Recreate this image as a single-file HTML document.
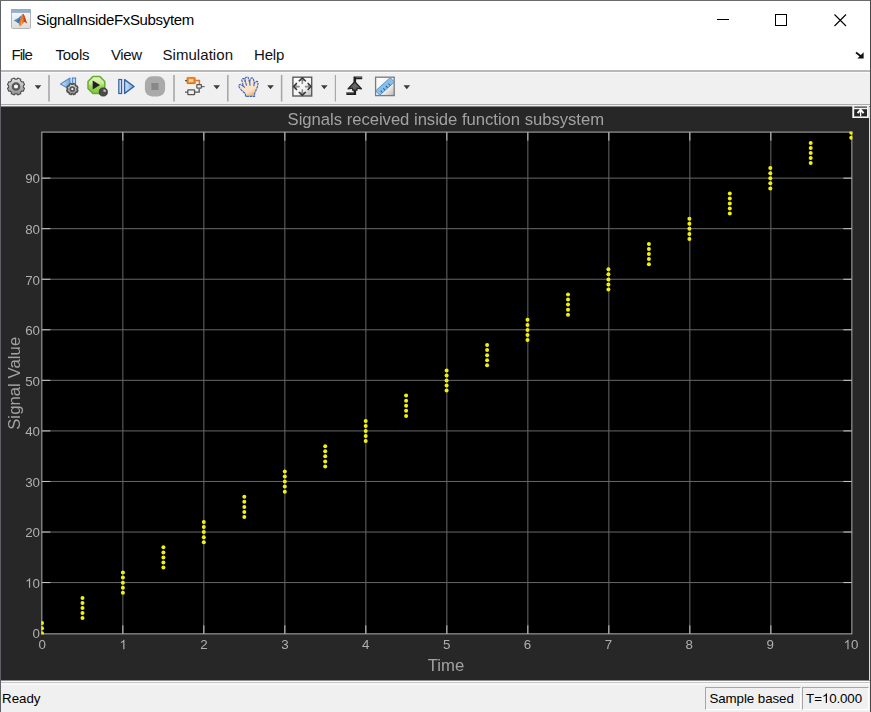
<!DOCTYPE html>
<html><head><meta charset="utf-8"><title>SignalInsideFxSubsytem</title>
<style>
html,body{margin:0;padding:0;}
body{width:871px;height:712px;position:relative;overflow:hidden;background:#fff;font-family:"Liberation Sans",sans-serif;}
.abs{position:absolute;white-space:nowrap;}
#title{left:36.3px;top:9.6px;font-size:15px;line-height:20px;color:#000;letter-spacing:-0.34px;}
.menu{top:45.4px;font-size:15px;line-height:20px;color:#111;}
#toolbar{left:1px;top:72px;width:869px;height:32px;background:#f0f0f0;}
#dark{left:1px;top:107px;width:868px;height:573px;background:#272727;}
#status{left:1px;top:683px;width:869px;height:29px;background:linear-gradient(#f7f7f7 0,#f7f7f7 2px,#f0f0f0 2px);}
.sbox{top:687px;height:23px;border:1px solid #a6a6a6;border-right-color:#fff;border-bottom-color:#fff;box-sizing:border-box;font-size:13.33px;line-height:22px;color:#000;text-align:left;}
.tick{font-size:13.33px;fill:#afafaf;font-family:"Liberation Sans",sans-serif;}
</style></head><body>

<div class="abs" style="left:0;top:0;width:1px;height:712px;background:#5e6166"></div>
<div class="abs" style="left:0;top:0;width:871px;height:1px;background:#6b6b6b"></div>
<div class="abs" style="left:870px;top:0;width:1px;height:712px;background:#484848"></div>
<div id="title" class="abs">SignalInsideFxSubsytem</div>
<div class="abs menu" style="left:11.4px;letter-spacing:-0.9px">File</div>
<div class="abs menu" style="left:55.5px;letter-spacing:-0.25px">Tools</div>
<div class="abs menu" style="left:111px;letter-spacing:-0.4px">View</div>
<div class="abs menu" style="left:162.5px;letter-spacing:0.05px">Simulation</div>
<div class="abs menu" style="left:254px;letter-spacing:-0.15px">Help</div>
<div class="abs" style="left:1px;top:70px;width:869px;height:2px;background:#b8b8b8"></div>
<div id="toolbar" class="abs"></div>
<div class="abs" style="left:1px;top:72px;width:869px;height:1px;background:#fafafa"></div>
<div class="abs" style="left:1px;top:104px;width:869px;height:1px;background:#ababab"></div>
<div class="abs" style="left:1px;top:105px;width:869px;height:1px;background:#eeeeee"></div>
<div class="abs" style="left:1px;top:106px;width:869px;height:1px;background:#808080"></div>
<div id="dark" class="abs"></div>
<div class="abs" style="left:869px;top:107px;width:1px;height:574px;background:#dcdcdc"></div>
<div class="abs" style="left:1px;top:680px;width:869px;height:1px;background:#8c8c8c"></div>
<div class="abs" style="left:1px;top:681px;width:869px;height:1px;background:#fbfbfb"></div>
<div class="abs" style="left:1px;top:682px;width:869px;height:1px;background:#c6c6c6"></div>
<div id="status" class="abs"></div>
<div class="abs" style="left:2px;top:689px;font-size:13.33px;line-height:20px;color:#000">Ready</div>
<div class="abs sbox" style="left:705px;width:96px;padding-left:3.4px;letter-spacing:-0.07px">Sample based</div>
<div class="abs sbox" style="left:802px;width:67px;padding-left:3.1px;letter-spacing:-0.1px">T=<svg width="7.31" height="10" viewBox="0 0 7.31 10" style="overflow:visible;vertical-align:baseline"><path d="M763 0 H583 V1147 Q518 1085 412.5 1023 T223 930 V1104 Q373 1174.5 485 1274.5 T644 1469 H763 Z" transform="translate(0,10) scale(0.006509,-0.006509)" fill="#000"/></svg>0.000</div>
<svg class="abs" style="left:0;top:0" width="871" height="106">
<defs>
<linearGradient id="gGear" x1="0" y1="0" x2="0" y2="1"><stop offset="0" stop-color="#e4e4e4"/><stop offset="1" stop-color="#8e8e8e"/></linearGradient>
<linearGradient id="gGreen" x1="0" y1="0" x2="0" y2="1"><stop offset="0" stop-color="#e8f8cc"/><stop offset="0.45" stop-color="#c0e688"/><stop offset="0.55" stop-color="#a0d658"/><stop offset="1" stop-color="#84c644"/></linearGradient>
<linearGradient id="gBlue" x1="0" y1="0" x2="1" y2="0"><stop offset="0" stop-color="#cfe6f8"/><stop offset="1" stop-color="#6fa8dc"/></linearGradient>
<linearGradient id="gBox" x1="0" y1="0" x2="1" y2="1"><stop offset="0" stop-color="#ffffff"/><stop offset="0.6" stop-color="#f4f4f4"/><stop offset="1" stop-color="#b8b8b8"/></linearGradient>
<linearGradient id="gSkin" x1="0" y1="0" x2="0.6" y2="1"><stop offset="0" stop-color="#fdebd6"/><stop offset="0.78" stop-color="#fbe2c4"/><stop offset="1" stop-color="#e8b478"/></linearGradient>
<linearGradient id="gIco" x1="0" y1="0" x2="0" y2="1"><stop offset="0" stop-color="#fbfbfb"/><stop offset="1" stop-color="#dcdcdc"/></linearGradient>
</defs>
<g style="filter:blur(0.3px)">
<rect x="11.5" y="9.5" width="19" height="19" rx="1.2" fill="url(#gIco)" stroke="#b4b4b4"/>
<rect x="11.5" y="9.5" width="19" height="3" fill="#8fb0d2" stroke="#8aa6c4" stroke-width="0.6"/>
<path d="M13.6 20.6 L18.2 18.0 L21.2 15.2 L20.6 20.0 L18.4 23.0 Z" fill="#4f8fd0"/>
<path d="M16.5 21.8 L20.6 17.6 L19.4 23.8 Z" fill="#2c5fa0" opacity="0.7"/>
<path d="M18.6 23.4 C20.4 19.6 21.2 14.2 23.0 13.8 C24.6 14.4 25.4 19.6 27.2 23.6 C25.6 22.6 24.8 21.4 23.6 22.6 C22.4 24.0 21.4 26.2 20.0 26.4 Z" fill="#e8742a"/>
<path d="M23.0 13.8 C24.6 14.4 25.4 19.6 27.2 23.6 C25.6 22.6 24.8 21.4 23.6 22.6 C24.0 19.6 23.6 16.2 23.0 13.8 Z" fill="#c8401e"/>
<path d="M20.0 26.4 C21.0 24.6 21.4 21.0 22.6 17.6 C22.0 21.6 22.8 23.0 21.8 24.8 Z" fill="#f6b04a"/>
</g>
<path d="M717 19.5 H729" stroke="#000" stroke-width="1"/>
<rect x="775.5" y="14.5" width="11" height="11" fill="none" stroke="#000" stroke-width="1"/>
<path d="M834.5 14.5 L846 26 M846 14.5 L834.5 26" stroke="#000" stroke-width="1.1"/>
<path d="M856 52.5 L862.5 57.5" stroke="#111" stroke-width="1.8"/><path d="M863.6 52.2 V58.4 H857.4 Z" fill="#111"/>
<g style="filter:blur(0.3px)">
<path d="M24.52 88.26 L23.27 91.28 L21.98 90.99 L20.49 92.48 L20.78 93.77 L17.76 95.02 L17.05 93.91 L14.95 93.91 L14.24 95.02 L11.22 93.77 L11.51 92.48 L10.02 90.99 L8.73 91.28 L7.48 88.26 L8.59 87.55 L8.59 85.45 L7.48 84.74 L8.73 81.72 L10.02 82.01 L11.51 80.52 L11.22 79.23 L14.24 77.98 L14.95 79.09 L17.05 79.09 L17.76 77.98 L20.78 79.23 L20.49 80.52 L21.98 82.01 L23.27 81.72 L24.52 84.74 L23.41 85.45 L23.41 87.55 Z" fill="url(#gGear)" stroke="#525252" stroke-width="1.1" stroke-linejoin="round"/><circle cx="16" cy="86.5" r="3.22" fill="#f6f6f6" stroke="#585858" stroke-width="2.26"/>
<path d="M34.7 85.2 H41.3 L38 89.2 Z" fill="#3c3c3c"/>
<rect x="48.2" y="75" width="1.6" height="26.5" fill="#a9a9a9"/>
<path d="M60.5 84 L70 78 V89.5 Z" fill="url(#gBlue)" stroke="#5a8cc8" stroke-width="1.1" stroke-linejoin="round"/>
<rect x="72.3" y="78" width="3.3" height="8" fill="#b8d8f4" stroke="#4a7cc0" stroke-width="1"/>
<path d="M77.88 90.26 L77.06 92.23 L76.13 91.97 L75.17 92.93 L75.43 93.86 L73.46 94.68 L72.97 93.84 L71.63 93.84 L71.14 94.68 L69.17 93.86 L69.43 92.93 L68.47 91.97 L67.54 92.23 L66.72 90.26 L67.56 89.77 L67.56 88.43 L66.72 87.94 L67.54 85.97 L68.47 86.23 L69.43 85.27 L69.17 84.34 L71.14 83.52 L71.63 84.36 L72.97 84.36 L73.46 83.52 L75.43 84.34 L75.17 85.27 L76.13 86.23 L77.06 85.97 L77.88 87.94 L77.04 88.43 L77.04 89.77 Z" fill="url(#gGear)" stroke="#525252" stroke-width="1.5" stroke-linejoin="round"/><circle cx="72.3" cy="89.1" r="1.99" fill="#f6f6f6" stroke="#585858" stroke-width="1.71"/>
<path d="M104.8 88.5 L99.9 93.4 L92.9 93.4 L88.0 88.5 L88.0 81.5 L92.9 76.6 L99.9 76.6 L104.8 81.5 Z" fill="url(#gGreen)" stroke="#64ae32" stroke-width="1.5" stroke-linejoin="round"/>
<path d="M92.7 80.6 L100 85 L92.7 89.4 Z" fill="#222"/>
<circle cx="103.3" cy="92" r="4.1" fill="#4a4a4a" stroke="#2e2e2e" stroke-width="0.8"/>
<path d="M103.5 91.8 V89.2 A2.6 2.6 0 0 1 106.1 91.8 Z" fill="#c4c4c4"/>
<rect x="118.8" y="79.5" width="2.8" height="14" fill="#c4def4" stroke="#35629e" stroke-width="1.2"/>
<path d="M124.6 79.6 L134 86.5 L124.6 93.4 Z" fill="url(#gBlue)" stroke="#35629e" stroke-width="1.4" stroke-linejoin="round"/>
<rect x="144.9" y="76.3" width="20.2" height="20.1" rx="7.2" fill="#aaaaaa"/>
<rect x="151.4" y="83" width="7.1" height="7" fill="#888888"/>
<rect x="173.2" y="75" width="1.6" height="26.5" fill="#a9a9a9"/>
<rect x="186.3" y="76.8" width="9.6" height="7.4" rx="1" fill="#f8d070" opacity="0.7"/>
<rect x="187.2" y="77.7" width="7.8" height="5.8" rx="0.8" fill="#f09038" stroke="#e06a18" stroke-width="1.1"/>
<rect x="189" y="79.2" width="4.2" height="2.6" fill="#fbd8a0"/>
<path d="M185 80.6 H187" stroke="#555" stroke-width="1.2"/>
<path d="M195.4 80.6 H199.4 V84.2" fill="none" stroke="#d87820" stroke-width="1.5"/>
<rect x="196.8" y="84.6" width="4.6" height="3.6" rx="0.6" fill="#f0f0f0" stroke="#555" stroke-width="1.2"/>
<path d="M201.8 86.6 H204.6" stroke="#666" stroke-width="1.2"/>
<rect x="187.8" y="89.8" width="6.8" height="4.8" rx="0.6" fill="#eeeeee" stroke="#555" stroke-width="1.3"/>
<path d="M185 92.2 H187.4 M195 92.2 H199.2 V88.8" fill="none" stroke="#555" stroke-width="1.3"/>
<path d="M213.39999999999998 85.2 H220.0 L216.7 89.2 Z" fill="#3c3c3c"/>
<rect x="227" y="75" width="1.6" height="26.5" fill="#a9a9a9"/>
<path d="M245.6 96.3 L245.4 93.8 L241.2 89.8 L238.8 86.6 Q238.4 84.6 240.6 84.4 L243.4 86.2 L241.8 80.4 Q242.0 78.2 243.8 78.6 L245.6 82.6 L245.0 78.6 Q246.0 76.6 248.0 77.2 L249.6 82.4 L250.4 78.6 Q251.8 77.2 253.2 78.4 L254.4 83.2 L255.8 81.6 Q257.6 80.8 258.2 82.6 L257.4 87.0 L255.8 90.8 L254.6 93.6 L254.6 96.3 Z" fill="url(#gSkin)" stroke="#3f63c6" stroke-width="1.15" stroke-linejoin="round" stroke-dasharray="2.6 0.7"/>
<path d="M245.7 82.6 L246.6 85.6 M249.8 82.2 L250.0 85.6 M254.3 83.0 L253.8 86.2 M243.4 86.2 L244.8 87.6" fill="none" stroke="#3f63c6" stroke-width="1.1"/>
<path d="M267.2 85.2 H273.8 L270.5 89.2 Z" fill="#3c3c3c"/>
<rect x="280.8" y="75" width="1.6" height="26.5" fill="#a9a9a9"/>
<rect x="292.9" y="77.2" width="18.8" height="18.8" fill="url(#gBox)" stroke="#5c5c5c" stroke-width="1.4"/>
<circle cx="302.3" cy="86.6" r="3.4" fill="#f4f4f4"/>
<g transform="rotate(0 302.3 86.6)"><path d="M302.3 77.4 L305.9 81.4 L303.1 80.8 V84 H301.5 V80.8 L298.7 81.4 Z" fill="#8c8c8c"/><path d="M298.8 81.2 L302.3 77.8 L305.8 81.2" fill="none" stroke="#3a3a3a" stroke-width="1.5"/></g>
<g transform="rotate(90 302.3 86.6)"><path d="M302.3 77.4 L305.9 81.4 L303.1 80.8 V84 H301.5 V80.8 L298.7 81.4 Z" fill="#8c8c8c"/><path d="M298.8 81.2 L302.3 77.8 L305.8 81.2" fill="none" stroke="#3a3a3a" stroke-width="1.5"/></g>
<g transform="rotate(180 302.3 86.6)"><path d="M302.3 77.4 L305.9 81.4 L303.1 80.8 V84 H301.5 V80.8 L298.7 81.4 Z" fill="#8c8c8c"/><path d="M298.8 81.2 L302.3 77.8 L305.8 81.2" fill="none" stroke="#3a3a3a" stroke-width="1.5"/></g>
<g transform="rotate(270 302.3 86.6)"><path d="M302.3 77.4 L305.9 81.4 L303.1 80.8 V84 H301.5 V80.8 L298.7 81.4 Z" fill="#8c8c8c"/><path d="M298.8 81.2 L302.3 77.8 L305.8 81.2" fill="none" stroke="#3a3a3a" stroke-width="1.5"/></g>
<path d="M321.0 85.2 H327.6 L324.3 89.2 Z" fill="#3c3c3c"/>
<rect x="334.8" y="75" width="1.2" height="26.5" fill="#a9a9a9"/>
<path d="M346.4 93.6 H354.8 V77.9 H362.2" fill="none" stroke="#1e1e1e" stroke-width="2.6"/>
<path d="M346.4 92.8 H354 M355.6 77.2 H362.2" fill="none" stroke="#8a8a8a" stroke-width="0.8"/>
<path d="M354.8 81.8 L361.4 88.8 L357.0 88.2 V90.2 H352.6 V88.2 L348.2 88.8 Z" fill="#666" stroke="#262626" stroke-width="1.3" stroke-linejoin="round"/>
<rect x="375.6" y="77.2" width="18.6" height="18.4" fill="url(#gBox)" stroke="#7a7a7a" stroke-width="1.3"/>
<g transform="rotate(-42 385 86.4)"><rect x="375.2" y="83.4" width="19.6" height="6" fill="#86c0ec" stroke="#5a94c8" stroke-width="0.9"/><path d="M379 89.2 V86.6 M382.5 89.2 V86.6 M386 89.2 V86.6 M389.5 89.2 V86.6" stroke="#3a5a80" stroke-width="1"/></g>
<path d="M403.5 85.2 H410.1 L406.8 89.2 Z" fill="#3c3c3c"/>
</g>
</svg>
<svg class="abs" style="left:0;top:0;filter:blur(0.35px)" width="871" height="712">
<defs><clipPath id="ax"><rect x="41.25" y="131.5" width="811.2" height="502.95"/></clipPath></defs>
<rect x="41.85" y="132.1" width="810.0" height="501.75" fill="#000"/>
<line x1="122.85" y1="132.1" x2="122.85" y2="633.85" stroke="#686868" stroke-width="1"/>
<line x1="122.85" y1="633.85" x2="122.85" y2="625.35" stroke="#c8c8c8" stroke-width="1"/>
<line x1="122.85" y1="132.1" x2="122.85" y2="140.6" stroke="#c8c8c8" stroke-width="1"/>
<line x1="203.85" y1="132.1" x2="203.85" y2="633.85" stroke="#686868" stroke-width="1"/>
<line x1="203.85" y1="633.85" x2="203.85" y2="625.35" stroke="#c8c8c8" stroke-width="1"/>
<line x1="203.85" y1="132.1" x2="203.85" y2="140.6" stroke="#c8c8c8" stroke-width="1"/>
<line x1="284.85" y1="132.1" x2="284.85" y2="633.85" stroke="#686868" stroke-width="1"/>
<line x1="284.85" y1="633.85" x2="284.85" y2="625.35" stroke="#c8c8c8" stroke-width="1"/>
<line x1="284.85" y1="132.1" x2="284.85" y2="140.6" stroke="#c8c8c8" stroke-width="1"/>
<line x1="365.85" y1="132.1" x2="365.85" y2="633.85" stroke="#686868" stroke-width="1"/>
<line x1="365.85" y1="633.85" x2="365.85" y2="625.35" stroke="#c8c8c8" stroke-width="1"/>
<line x1="365.85" y1="132.1" x2="365.85" y2="140.6" stroke="#c8c8c8" stroke-width="1"/>
<line x1="446.85" y1="132.1" x2="446.85" y2="633.85" stroke="#686868" stroke-width="1"/>
<line x1="446.85" y1="633.85" x2="446.85" y2="625.35" stroke="#c8c8c8" stroke-width="1"/>
<line x1="446.85" y1="132.1" x2="446.85" y2="140.6" stroke="#c8c8c8" stroke-width="1"/>
<line x1="527.85" y1="132.1" x2="527.85" y2="633.85" stroke="#686868" stroke-width="1"/>
<line x1="527.85" y1="633.85" x2="527.85" y2="625.35" stroke="#c8c8c8" stroke-width="1"/>
<line x1="527.85" y1="132.1" x2="527.85" y2="140.6" stroke="#c8c8c8" stroke-width="1"/>
<line x1="608.85" y1="132.1" x2="608.85" y2="633.85" stroke="#686868" stroke-width="1"/>
<line x1="608.85" y1="633.85" x2="608.85" y2="625.35" stroke="#c8c8c8" stroke-width="1"/>
<line x1="608.85" y1="132.1" x2="608.85" y2="140.6" stroke="#c8c8c8" stroke-width="1"/>
<line x1="689.85" y1="132.1" x2="689.85" y2="633.85" stroke="#686868" stroke-width="1"/>
<line x1="689.85" y1="633.85" x2="689.85" y2="625.35" stroke="#c8c8c8" stroke-width="1"/>
<line x1="689.85" y1="132.1" x2="689.85" y2="140.6" stroke="#c8c8c8" stroke-width="1"/>
<line x1="770.85" y1="132.1" x2="770.85" y2="633.85" stroke="#686868" stroke-width="1"/>
<line x1="770.85" y1="633.85" x2="770.85" y2="625.35" stroke="#c8c8c8" stroke-width="1"/>
<line x1="770.85" y1="132.1" x2="770.85" y2="140.6" stroke="#c8c8c8" stroke-width="1"/>
<line x1="41.85" y1="582.57" x2="851.85" y2="582.57" stroke="#686868" stroke-width="1"/>
<line x1="41.85" y1="582.57" x2="50.35" y2="582.57" stroke="#c8c8c8" stroke-width="1"/>
<line x1="851.85" y1="582.57" x2="843.35" y2="582.57" stroke="#c8c8c8" stroke-width="1"/>
<line x1="41.85" y1="532.02" x2="851.85" y2="532.02" stroke="#686868" stroke-width="1"/>
<line x1="41.85" y1="532.02" x2="50.35" y2="532.02" stroke="#c8c8c8" stroke-width="1"/>
<line x1="851.85" y1="532.02" x2="843.35" y2="532.02" stroke="#c8c8c8" stroke-width="1"/>
<line x1="41.85" y1="481.46" x2="851.85" y2="481.46" stroke="#686868" stroke-width="1"/>
<line x1="41.85" y1="481.46" x2="50.35" y2="481.46" stroke="#c8c8c8" stroke-width="1"/>
<line x1="851.85" y1="481.46" x2="843.35" y2="481.46" stroke="#c8c8c8" stroke-width="1"/>
<line x1="41.85" y1="430.91" x2="851.85" y2="430.91" stroke="#686868" stroke-width="1"/>
<line x1="41.85" y1="430.91" x2="50.35" y2="430.91" stroke="#c8c8c8" stroke-width="1"/>
<line x1="851.85" y1="430.91" x2="843.35" y2="430.91" stroke="#c8c8c8" stroke-width="1"/>
<line x1="41.85" y1="380.35" x2="851.85" y2="380.35" stroke="#686868" stroke-width="1"/>
<line x1="41.85" y1="380.35" x2="50.35" y2="380.35" stroke="#c8c8c8" stroke-width="1"/>
<line x1="851.85" y1="380.35" x2="843.35" y2="380.35" stroke="#c8c8c8" stroke-width="1"/>
<line x1="41.85" y1="329.79" x2="851.85" y2="329.79" stroke="#686868" stroke-width="1"/>
<line x1="41.85" y1="329.79" x2="50.35" y2="329.79" stroke="#c8c8c8" stroke-width="1"/>
<line x1="851.85" y1="329.79" x2="843.35" y2="329.79" stroke="#c8c8c8" stroke-width="1"/>
<line x1="41.85" y1="279.24" x2="851.85" y2="279.24" stroke="#686868" stroke-width="1"/>
<line x1="41.85" y1="279.24" x2="50.35" y2="279.24" stroke="#c8c8c8" stroke-width="1"/>
<line x1="851.85" y1="279.24" x2="843.35" y2="279.24" stroke="#c8c8c8" stroke-width="1"/>
<line x1="41.85" y1="228.68" x2="851.85" y2="228.68" stroke="#686868" stroke-width="1"/>
<line x1="41.85" y1="228.68" x2="50.35" y2="228.68" stroke="#c8c8c8" stroke-width="1"/>
<line x1="851.85" y1="228.68" x2="843.35" y2="228.68" stroke="#c8c8c8" stroke-width="1"/>
<line x1="41.85" y1="178.13" x2="851.85" y2="178.13" stroke="#686868" stroke-width="1"/>
<line x1="41.85" y1="178.13" x2="50.35" y2="178.13" stroke="#c8c8c8" stroke-width="1"/>
<line x1="851.85" y1="178.13" x2="843.35" y2="178.13" stroke="#c8c8c8" stroke-width="1"/>
<rect x="41.85" y="132.1" width="810.0" height="501.75" fill="none" stroke="#afafaf" stroke-width="1"/>
<g fill="#f0f010" clip-path="url(#ax)">
<circle cx="42.0" cy="633.3" r="2.0"/>
<circle cx="42.0" cy="628.2" r="2.0"/>
<circle cx="42.0" cy="623.1" r="2.0"/>
<circle cx="82.5" cy="618.1" r="2.0"/>
<circle cx="82.5" cy="613.0" r="2.0"/>
<circle cx="82.5" cy="608.0" r="2.0"/>
<circle cx="82.5" cy="602.9" r="2.0"/>
<circle cx="82.5" cy="597.9" r="2.0"/>
<circle cx="122.9" cy="592.8" r="2.0"/>
<circle cx="122.9" cy="587.8" r="2.0"/>
<circle cx="122.9" cy="582.7" r="2.0"/>
<circle cx="122.9" cy="577.6" r="2.0"/>
<circle cx="122.9" cy="572.6" r="2.0"/>
<circle cx="163.4" cy="567.5" r="2.0"/>
<circle cx="163.4" cy="562.5" r="2.0"/>
<circle cx="163.4" cy="557.4" r="2.0"/>
<circle cx="163.4" cy="552.4" r="2.0"/>
<circle cx="163.4" cy="547.3" r="2.0"/>
<circle cx="203.8" cy="542.3" r="2.0"/>
<circle cx="203.8" cy="537.2" r="2.0"/>
<circle cx="203.8" cy="532.1" r="2.0"/>
<circle cx="203.8" cy="527.1" r="2.0"/>
<circle cx="203.8" cy="522.0" r="2.0"/>
<circle cx="244.3" cy="517.0" r="2.0"/>
<circle cx="244.3" cy="511.9" r="2.0"/>
<circle cx="244.3" cy="506.9" r="2.0"/>
<circle cx="244.3" cy="501.8" r="2.0"/>
<circle cx="244.3" cy="496.8" r="2.0"/>
<circle cx="284.8" cy="491.7" r="2.0"/>
<circle cx="284.8" cy="486.6" r="2.0"/>
<circle cx="284.8" cy="481.6" r="2.0"/>
<circle cx="284.8" cy="476.5" r="2.0"/>
<circle cx="284.8" cy="471.5" r="2.0"/>
<circle cx="325.2" cy="466.4" r="2.0"/>
<circle cx="325.2" cy="461.4" r="2.0"/>
<circle cx="325.2" cy="456.3" r="2.0"/>
<circle cx="325.2" cy="451.3" r="2.0"/>
<circle cx="325.2" cy="446.2" r="2.0"/>
<circle cx="365.7" cy="441.1" r="2.0"/>
<circle cx="365.7" cy="436.1" r="2.0"/>
<circle cx="365.7" cy="431.0" r="2.0"/>
<circle cx="365.7" cy="426.0" r="2.0"/>
<circle cx="365.7" cy="420.9" r="2.0"/>
<circle cx="406.1" cy="415.9" r="2.0"/>
<circle cx="406.1" cy="410.8" r="2.0"/>
<circle cx="406.1" cy="405.8" r="2.0"/>
<circle cx="406.1" cy="400.7" r="2.0"/>
<circle cx="406.1" cy="395.6" r="2.0"/>
<circle cx="446.6" cy="390.6" r="2.0"/>
<circle cx="446.6" cy="385.5" r="2.0"/>
<circle cx="446.6" cy="380.5" r="2.0"/>
<circle cx="446.6" cy="375.4" r="2.0"/>
<circle cx="446.6" cy="370.4" r="2.0"/>
<circle cx="487.1" cy="365.3" r="2.0"/>
<circle cx="487.1" cy="360.3" r="2.0"/>
<circle cx="487.1" cy="355.2" r="2.0"/>
<circle cx="487.1" cy="350.1" r="2.0"/>
<circle cx="487.1" cy="345.1" r="2.0"/>
<circle cx="527.5" cy="340.0" r="2.0"/>
<circle cx="527.5" cy="335.0" r="2.0"/>
<circle cx="527.5" cy="329.9" r="2.0"/>
<circle cx="527.5" cy="324.9" r="2.0"/>
<circle cx="527.5" cy="319.8" r="2.0"/>
<circle cx="568.0" cy="314.8" r="2.0"/>
<circle cx="568.0" cy="309.7" r="2.0"/>
<circle cx="568.0" cy="304.6" r="2.0"/>
<circle cx="568.0" cy="299.6" r="2.0"/>
<circle cx="568.0" cy="294.5" r="2.0"/>
<circle cx="608.4" cy="289.5" r="2.0"/>
<circle cx="608.4" cy="284.4" r="2.0"/>
<circle cx="608.4" cy="279.4" r="2.0"/>
<circle cx="608.4" cy="274.3" r="2.0"/>
<circle cx="608.4" cy="269.3" r="2.0"/>
<circle cx="648.9" cy="264.2" r="2.0"/>
<circle cx="648.9" cy="259.1" r="2.0"/>
<circle cx="648.9" cy="254.1" r="2.0"/>
<circle cx="648.9" cy="249.0" r="2.0"/>
<circle cx="648.9" cy="244.0" r="2.0"/>
<circle cx="689.4" cy="238.9" r="2.0"/>
<circle cx="689.4" cy="233.9" r="2.0"/>
<circle cx="689.4" cy="228.8" r="2.0"/>
<circle cx="689.4" cy="223.8" r="2.0"/>
<circle cx="689.4" cy="218.7" r="2.0"/>
<circle cx="729.8" cy="213.6" r="2.0"/>
<circle cx="729.8" cy="208.6" r="2.0"/>
<circle cx="729.8" cy="203.5" r="2.0"/>
<circle cx="729.8" cy="198.5" r="2.0"/>
<circle cx="729.8" cy="193.4" r="2.0"/>
<circle cx="770.3" cy="188.4" r="2.0"/>
<circle cx="770.3" cy="183.3" r="2.0"/>
<circle cx="770.3" cy="178.3" r="2.0"/>
<circle cx="770.3" cy="173.2" r="2.0"/>
<circle cx="770.3" cy="168.1" r="2.0"/>
<circle cx="810.7" cy="163.1" r="2.0"/>
<circle cx="810.7" cy="158.0" r="2.0"/>
<circle cx="810.7" cy="153.0" r="2.0"/>
<circle cx="810.7" cy="147.9" r="2.0"/>
<circle cx="810.7" cy="142.9" r="2.0"/>
<circle cx="851.2" cy="137.8" r="2.0"/>
<circle cx="851.2" cy="132.8" r="2.0"/>
</g>
<text class="tick" x="42.3" y="649.2" text-anchor="middle">0</text>
<path d="M763 0 H583 V1147 Q518 1085 412.5 1023 T223 930 V1104 Q373 1174.5 485 1274.5 T644 1469 H763 Z" transform="translate(119.47,649.20) scale(0.006509,-0.006509)" fill="#afafaf"/>
<text class="tick" x="204.0" y="649.2" text-anchor="middle">2</text>
<text class="tick" x="284.9" y="649.2" text-anchor="middle">3</text>
<text class="tick" x="365.8" y="649.2" text-anchor="middle">4</text>
<text class="tick" x="446.7" y="649.2" text-anchor="middle">5</text>
<text class="tick" x="527.5" y="649.2" text-anchor="middle">6</text>
<text class="tick" x="608.4" y="649.2" text-anchor="middle">7</text>
<text class="tick" x="689.3" y="649.2" text-anchor="middle">8</text>
<text class="tick" x="770.1" y="649.2" text-anchor="middle">9</text>
<path d="M763 0 H583 V1147 Q518 1085 412.5 1023 T223 930 V1104 Q373 1174.5 485 1274.5 T644 1469 H763 Z" transform="translate(843.59,649.20) scale(0.006509,-0.006509)" fill="#afafaf"/>
<text class="tick" x="851.0" y="649.2" text-anchor="start">0</text>
<text class="tick" x="40" y="638.4" text-anchor="end">0</text>
<path d="M763 0 H583 V1147 Q518 1085 412.5 1023 T223 930 V1104 Q373 1174.5 485 1274.5 T644 1469 H763 Z" transform="translate(25.17,587.80) scale(0.006509,-0.006509)" fill="#afafaf"/>
<text class="tick" x="40" y="587.8" text-anchor="end">0</text>
<text class="tick" x="40" y="537.2" text-anchor="end">20</text>
<text class="tick" x="40" y="486.7" text-anchor="end">30</text>
<text class="tick" x="40" y="436.1" text-anchor="end">40</text>
<text class="tick" x="40" y="385.6" text-anchor="end">50</text>
<text class="tick" x="40" y="335.0" text-anchor="end">60</text>
<text class="tick" x="40" y="284.5" text-anchor="end">70</text>
<text class="tick" x="40" y="233.9" text-anchor="end">80</text>
<text class="tick" x="40" y="183.4" text-anchor="end">90</text>
<text x="287.6" y="125.4" textLength="316.4" lengthAdjust="spacing" font-size="16.67" fill="#a2a2a2" font-family="Liberation Sans, sans-serif">Signals received inside function subsystem</text>
<text x="446" y="670.6" text-anchor="middle" font-size="16.67" fill="#a2a2a2" font-family="Liberation Sans, sans-serif">Time</text>
<text transform="translate(20.3,429.8) rotate(-90)" textLength="93" lengthAdjust="spacing" font-size="16.67" fill="#a2a2a2" font-family="Liberation Sans, sans-serif">Signal Value</text>
<rect x="852.3" y="105.6" width="16.6" height="12.4" fill="#f4f4f4"/>
<rect x="854.2" y="106.4" width="12.8" height="1.5" fill="#5a5a5a"/>
<rect x="854.2" y="109.2" width="12.8" height="7.2" fill="#262626"/>
<path d="M860.6 109 V116.4" stroke="#fafafa" stroke-width="1.3"/>
<path d="M857.6 113.2 L860.6 109.8 L863.6 113.2" fill="none" stroke="#fafafa" stroke-width="2"/>
</svg>
</body></html>
